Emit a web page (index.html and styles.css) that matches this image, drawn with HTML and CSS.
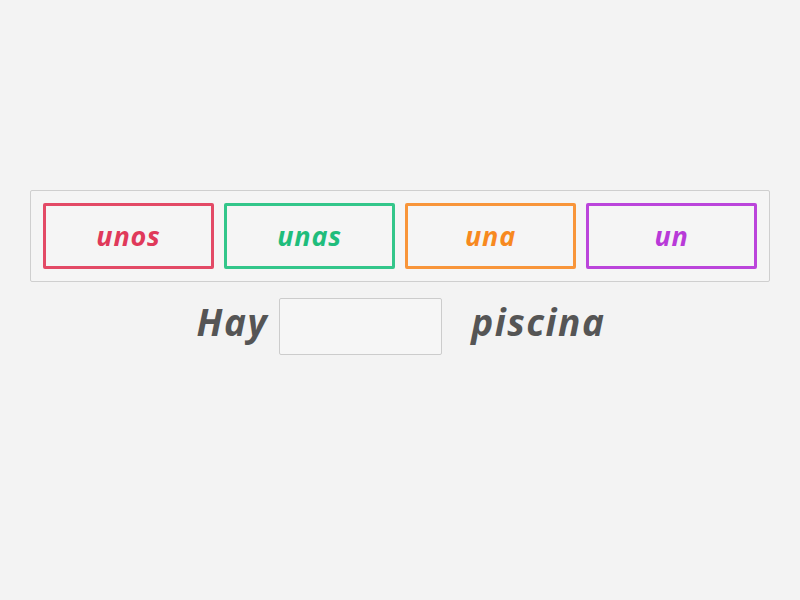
FILE: index.html
```html
<!DOCTYPE html>
<html lang="es">

<head>
    <meta charset="UTF-8">
    <meta name="viewport" content="width=device-width, initial-scale=1.0">
    <title>Completa la frase</title>
    <link rel="stylesheet" href="styles.css">
</head>

<body>
    <div class="activity">
        <div class="word-bank">
            <div class="word red">unos</div>
            <div class="word green">unas</div>
            <div class="word orange">una</div>
            <div class="word purple">un</div>
        </div>

        <div class="sentence">
            <span class="text">Hay</span>
            <span class="blank"></span>
            <span class="text after">piscina</span>
        </div>
    </div>
</body>

</html>
```

FILE: styles.css
```css
body {
    margin: 0;
    height: 600px;
    background-color: #f3f3f3;
    font-family: "Open Sans", sans-serif;
    font-style: italic;
    font-weight: 700;
}

.activity {
    padding: 190px 30px 0 30px;
}

.word-bank {
    display: flex;
    gap: 10px;
    padding: 12px;
    border: 1px solid #cfcfcf;
    border-radius: 2px;
    background-color: #f5f5f5;
}

.word {
    flex: 1;
    height: 58px;
    display: flex;
    justify-content: center;
    align-items: center;
    border: 3px solid;
    border-radius: 2px;
    font-size: 27px;
    letter-spacing: 0.8px;
    line-height: 1;
    padding-bottom: 2px;
    box-sizing: content-box;
}

.red {
    color: #e0395a;
    border-color: #e34a66;
}

.green {
    color: #1fbd7c;
    border-color: #33c68a;
}

.orange {
    color: #f7891f;
    border-color: #f8953a;
}

.purple {
    color: #b83ad8;
    border-color: #bb45db;
}

.sentence {
    display: flex;
    justify-content: center;
    align-items: center;
    margin-top: 16px;
    padding-left: 2px;
}

.text {
    font-size: 37px;
    letter-spacing: 1.5px;
    line-height: 1;
    margin-bottom: 10px;
    color: #555555;
}

.blank {
    width: 161px;
    height: 55px;
    margin-left: 11px;
    border: 1px solid #cccccc;
    border-radius: 2px;
    background-color: #f6f6f6;
}

.after {
    margin-left: 29px;
}
```
